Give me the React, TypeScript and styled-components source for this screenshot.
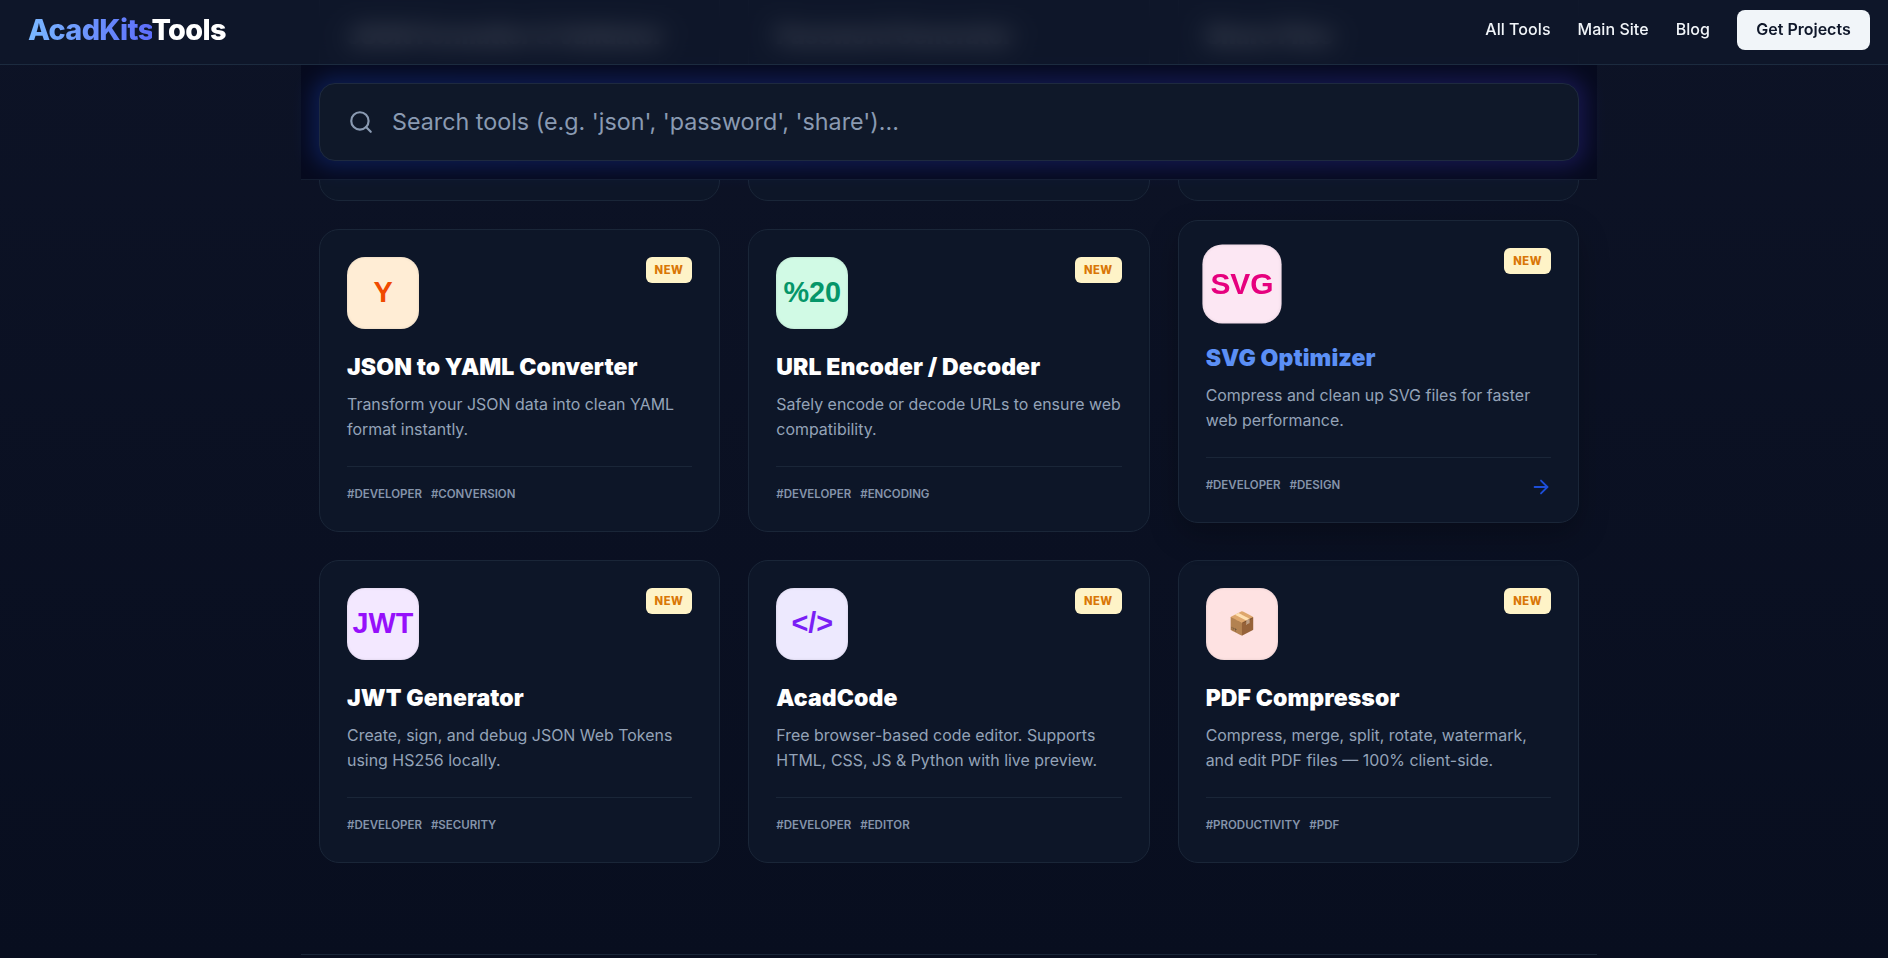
import React from "react";
import styled, { createGlobalStyle } from "styled-components";
import { Search, ArrowRight } from "lucide-react";

const GlobalStyle = createGlobalStyle`
  * {
    box-sizing: border-box;
  }
  html,
  body {
    margin: 0;
    height: 100%;
    overflow: hidden;
  }
  body {
    background: linear-gradient(180deg, #0d1326 0%, #080e1f 100%);
    font-family: Inter, "Liberation Sans", sans-serif;
    color: #fff;
  }
`;

const Page = styled.div`
  position: relative;
  height: 958px;
  overflow: hidden;
`;

const Header = styled.header`
  position: absolute;
  top: 0;
  left: 0;
  right: 0;
  z-index: 20;
  height: 65px;
  display: flex;
  align-items: center;
  justify-content: space-between;
  padding: 10px 18px 14px 28px;
  background: rgba(15, 23, 42, 0.78);
  backdrop-filter: blur(12px);
  border-bottom: 1px solid #1c2b3f;
`;

const Logo = styled.div`
  padding-bottom: 2px;
  font-size: 28.8px;
  font-weight: 800;
  letter-spacing: -0.65px;
  color: #fff;
  span {
    background: linear-gradient(90deg, #7ab8ff, #5d6dfa);
    -webkit-background-clip: text;
    background-clip: text;
    color: transparent;
  }
`;

const Nav = styled.nav`
  display: flex;
  align-items: center;
  gap: 27px;
`;

const NavLink = styled.a`
  padding-bottom: 2px;
  font-size: 16px;
  font-weight: 500;
  letter-spacing: 0.05px;
  color: #f1f5f9;
`;

const CtaButton = styled.button`
  width: 133px;
  height: 40px;
  padding: 0 0 2px;
  border: 0;
  border-radius: 8px;
  background: #f1f5f9;
  color: #0f172a;
  font-family: inherit;
  font-size: 16px;
  font-weight: 600;
`;

const Main = styled.main`
  width: 1296px;
  margin-left: 301px;
`;

const SearchSection = styled.section`
  position: absolute;
  top: 65px;
  left: 301px;
  z-index: 10;
  width: 1296px;
  padding: 18px;
  background: #060a1e;
  border-bottom: 1px solid #141d30;
`;

const SearchBox = styled.div`
  position: relative;
  height: 78px;
  display: flex;
  align-items: center;
  gap: 18px;
  padding: 0 28px;
  background: #0f1829;
  border: 1px solid #1e2a3f;
  border-radius: 16px;
  color: #8a9ab2;
  svg {
    flex: none;
  }
  &::before {
    content: "";
    position: absolute;
    inset: -8px;
    z-index: -1;
    border-radius: 22px;
    background: linear-gradient(90deg, #1d4ed8, #4338ca);
    opacity: 0.26;
    filter: blur(10px);
  }
`;

const Placeholder = styled.span`
  padding-bottom: 2px;
  font-size: 23.3px;
  color: #8a9ab2;
`;

const Grid = styled.div`
  display: grid;
  grid-template-columns: repeat(3, 1fr);
  gap: 28px;
  padding: 0 18px;
  margin-top: -102px;
`;

const Card = styled.article<{ $hover?: boolean }>`
  display: flex;
  flex-direction: column;
  height: 303px;
  padding: 27px;
  background: #0d1628;
  border: 1px solid #1a2638;
  border-radius: 20px;
  transform: ${(p) => (p.$hover ? "translateY(-9px)" : "none")};
  box-shadow: ${(p) => (p.$hover ? "0 12px 30px rgba(0, 0, 0, 0.25)" : "none")};
`;

const CardTop = styled.div`
  display: flex;
  align-items: flex-start;
  justify-content: space-between;
  margin-bottom: 24px;
`;

const IconTile = styled.div<{ $bg: string; $fg: string; $hover?: boolean; $size: number }>`
  width: 72px;
  height: 72px;
  padding-bottom: 1px;
  display: flex;
  align-items: center;
  justify-content: center;
  border-radius: 18px;
  background: ${(p) => p.$bg};
  color: ${(p) => p.$fg};
  font-family: "Liberation Sans", sans-serif;
  font-size: ${(p) => p.$size}px;
  font-weight: 700;
  box-shadow: inset 0 0 3px rgba(0, 0, 0, 0.12);
  transform: ${(p) => (p.$hover ? "scale(1.1)" : "none")};
`;

const NewBadge = styled.span`
  height: 26px;
  padding: 0 9px;
  display: flex;
  align-items: center;
  border-radius: 6px;
  background: #fef3c7;
  color: #d97706;
  font-size: 11.2px;
  font-weight: 800;
  letter-spacing: 0.5px;
`;

const Title = styled.h3<{ $hover?: boolean }>`
  margin: 0 0 10px;
  font-size: 23px;
  line-height: 29px;
  font-weight: 900;
  letter-spacing: 0.1px;
  color: ${(p) => (p.$hover ? "#5b8ff5" : "#fff")};
`;

const Desc = styled.p`
  margin: 0;
  font-size: 15.95px;
  line-height: 25px;
  color: #94a3b8;
`;

const CardFoot = styled.div`
  margin-top: auto;
  padding: 18px 0 1px;
  display: flex;
  align-items: center;
  justify-content: space-between;
  border-top: 1px solid #1a2638;
`;

const Tags = styled.div`
  display: flex;
  gap: 9px;
  line-height: 18px;
`;

const Tag = styled.span`
  font-size: 11.5px;
  font-weight: 600;
  color: #8594ab;
  text-transform: uppercase;
`;

const CardArrow = styled(ArrowRight)`
  margin: -2px 0;
  transform: translate(1px, 2px);
`;

const FootRule = styled.div`
  height: 1px;
  margin-top: 91px;
  background: #1a2638;
`;

type Tool = {
  icon: string;
  iconSize?: number;
  bg: string;
  fg: string;
  title: string;
  desc: string;
  tags: string[];
  hover?: boolean;
};

const tools: Tool[] = [
  { icon: "{}", bg: "#dbeafe", fg: "#2563eb", title: "JSON Formatter & Validator", desc: "Beautify, minify and validate your JSON data in the browser.", tags: ["developer", "json"] },
  { icon: "P", bg: "#dcfce7", fg: "#16a34a", title: "Password Generator", desc: "Create strong, random passwords right in your browser.", tags: ["developer", "security"] },
  { icon: "S", bg: "#fef3c7", fg: "#d97706", title: "Share Files", desc: "Send files directly between devices without an account.", tags: ["productivity", "share"] },
  { icon: "Y", bg: "#ffedd5", fg: "#f04a00", title: "JSON to YAML Converter", desc: "Transform your JSON data into clean YAML format instantly.", tags: ["developer", "conversion"] },
  { icon: "%20", bg: "#d1fae5", fg: "#059669", title: "URL Encoder / Decoder", desc: "Safely encode or decode URLs to ensure web compatibility.", tags: ["developer", "encoding"] },
  { icon: "SVG", iconSize: 27.2, bg: "#fce7f3", fg: "#e6007e", title: "SVG Optimizer", desc: "Compress and clean up SVG files for faster web performance.", tags: ["developer", "design"], hover: true },
  { icon: "JWT", bg: "#f3e8ff", fg: "#9610fb", title: "JWT Generator", desc: "Create, sign, and debug JSON Web Tokens using HS256 locally.", tags: ["developer", "security"] },
  { icon: "</>", bg: "#ede9fe", fg: "#7a1ff5", title: "AcadCode", desc: "Free browser-based code editor. Supports HTML, CSS, JS & Python with live preview.", tags: ["developer", "editor"] },
  { icon: "📦", iconSize: 22.4, bg: "#fee2e2", fg: "#000", title: "PDF Compressor", desc: "Compress, merge, split, rotate, watermark, and edit PDF files — 100% client-side.", tags: ["productivity", "pdf"] },
];

export default function App() {
  return (
    <>
      <GlobalStyle />
      <Page>
        <Header>
          <Logo>
            <span>AcadKits</span>Tools
          </Logo>
          <Nav>
            <NavLink>All Tools</NavLink>
            <NavLink>Main Site</NavLink>
            <NavLink>Blog</NavLink>
            <CtaButton>Get Projects</CtaButton>
          </Nav>
        </Header>
        <SearchSection>
          <SearchBox>
            <Search size={26} strokeWidth={2} />
            <Placeholder>Search tools (e.g. 'json', 'password', 'share')...</Placeholder>
          </SearchBox>
        </SearchSection>
        <Main>
          <Grid>
            {tools.map((tool) => (
              <Card key={tool.title} $hover={tool.hover}>
                <CardTop>
                  <IconTile $bg={tool.bg} $fg={tool.fg} $hover={tool.hover} $size={tool.iconSize ?? 28.8}>
                    {tool.icon}
                  </IconTile>
                  <NewBadge>NEW</NewBadge>
                </CardTop>
                <Title $hover={tool.hover}>{tool.title}</Title>
                <Desc>{tool.desc}</Desc>
                <CardFoot>
                  <Tags>
                    {tool.tags.map((tag) => (
                      <Tag key={tag}>#{tag}</Tag>
                    ))}
                  </Tags>
                  {tool.hover && <CardArrow size={22} color="#1d4ed8" />}
                </CardFoot>
              </Card>
            ))}
          </Grid>
          <FootRule />
        </Main>
      </Page>
    </>
  );
}
